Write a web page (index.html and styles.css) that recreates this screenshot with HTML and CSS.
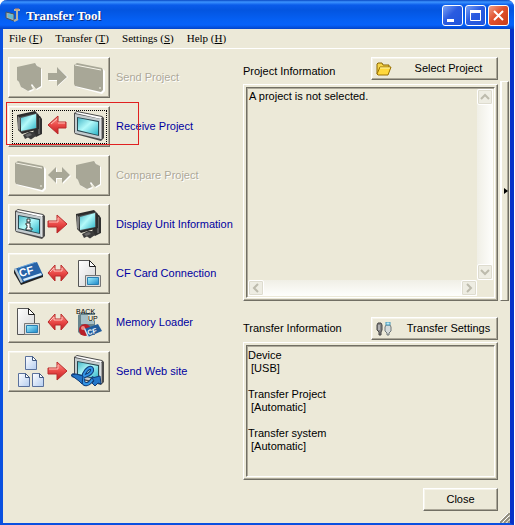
FILE: index.html
```html
<!DOCTYPE html>
<html lang="en">
<head>
<meta charset="utf-8">
<title>Transfer Tool</title>
<link rel="stylesheet" href="styles.css">
</head>
<body>
<svg class="defs" aria-hidden="true">
  <defs>
    <linearGradient id="screen" x1="0" y1="0" x2="1" y2="1">
      <stop offset="0" stop-color="#48b8c8"/><stop offset=".45" stop-color="#b4fafa"/><stop offset="1" stop-color="#2cb4c8"/>
    </linearGradient>
    <linearGradient id="lcd" x1="0" y1="0" x2="1" y2="1">
      <stop offset="0" stop-color="#a4f4ff"/><stop offset="1" stop-color="#1c86c8"/>
    </linearGradient>
    <linearGradient id="red" x1="0" y1="0" x2="0" y2="1">
      <stop offset="0" stop-color="#ff9a90"/><stop offset=".5" stop-color="#ea4a48"/><stop offset="1" stop-color="#c01c20"/>
    </linearGradient>
    <linearGradient id="page" x1="0" y1="0" x2="1" y2="1">
      <stop offset="0" stop-color="#ffffff"/><stop offset="1" stop-color="#d4d4d4"/>
    </linearGradient>
    <linearGradient id="bluepage" x1="0" y1="0" x2="1" y2="1">
      <stop offset="0" stop-color="#ffffff"/><stop offset="1" stop-color="#b4cdf0"/>
    </linearGradient>
    <symbol id="pc" viewBox="0 0 26 30">
      <path d="M19 5l4 1 2 3v15l-6 3-3-3z" fill="#303030"/>
      <path d="M22 8v16" stroke="#858585"/>
      <path d="M6 25l6-3h5l2 4-5 3.500-3-2-3 1.500z" fill="#3c3c3c"/>
      <path d="M8 25l5-2 2 2-5 2z" fill="#6a6a6a"/>
      <path d="M0 5L18 1l4 4v14L5 24l-4-4z" fill="#2c2c2c"/>
      <path d="M1 6l2 2v13l-2-2z" fill="#808080"/>
      <path d="M3 7l17-4v15L4 22z" fill="#525a5c"/>
      <path d="M4 8l15-4v14L4 21z" fill="url(#screen)"/>
    </symbol>
    <symbol id="panel" viewBox="0 0 30 30">
      <path d="M0 2l3-2 25 5 2 2v20l-3 3L1 23l-1-2z" fill="#4c4c4c"/>
      <path d="M1 2l2-1 25 5-1 2z" fill="#fff"/>
      <path d="M1 3l26 5v20L1 22z" fill="#c4cccf"/>
      <path d="M3 6l22 4v15L3 20z" fill="#284850"/>
      <path d="M4 7l20 4v13L4 19z" fill="url(#screen)"/>
      <path d="M27 8v20" stroke="#f5f5f5"/>
    </symbol>
    <symbol id="pc-off" viewBox="0 0 26 30">
      <path d="M1 6L19 2l2 3 4 2v18l-5 3-4-4-1 1 2 3-4 2-8-4-2-5-2-2z" fill="#fff"/>
      <path d="M0 5L18 1l2 3 4 2v18l-5 3-4-5-1 1 2 4-5 2-7-4-2-5-2-2z" fill="#a8a797"/>
    </symbol>
    <symbol id="panel-off" viewBox="0 0 31 31">
      <path d="M1 3l3-2 25 5 2 2v20l-3 3L2 24l-1-2z" fill="#fff"/>
      <path d="M0 2l3-2 25 5 1 2v20l-2 2L1 23l-1-2z" fill="#a8a797"/>
      <path d="M1 2l26 5" stroke="#f6f4e8" fill="none"/>
      <path d="M25 25h2" stroke="#f6f4e8"/>
    </symbol>
    <symbol id="right" viewBox="0 0 22 20">
      <path d="M1 7h9V1l10 9-10 9v-6H1z" fill="url(#red)" stroke="#b92c2c"/>
      <path d="M2 8h9V4" stroke="#ffc0b8" fill="none"/>
    </symbol>
    <symbol id="left" viewBox="0 0 22 20">
      <path d="M19 7h-8V1L1 10l10 9v-6h8z" fill="url(#red)" stroke="#b92c2c"/>
      <path d="M10 4L4 9M11 8h7" stroke="#ffc0b8" fill="none"/>
    </symbol>
    <symbol id="both" viewBox="0 0 22 20">
      <path d="M1 10l7-8v5h6V2l7 8-7 8v-5H8v5z" fill="url(#red)" stroke="#b92c2c"/>
      <path d="M3 9l4-4v3h8V5" stroke="#ffc0b8" fill="none"/>
    </symbol>
    <symbol id="doc" viewBox="0 0 25 29">
      <path d="M1.500 1.500h11l6 6v20h-17z" fill="url(#page)" stroke="#555"/>
      <path d="M12.500 1.500v6h6z" fill="#fff" stroke="#222"/>
      <path d="M8.500 16.500h15v11h-15z" fill="#dcdcdc" stroke="#777"/>
      <path d="M10.500 18.500h11v7h-11z" fill="url(#lcd)" stroke="#2a7fb0"/>
    </symbol>
    <symbol id="cf" viewBox="0 0 30 24">
      <path d="M0 8v3l7 12 22-8v-3z" fill="#222"/>
      <path d="M0 7L23 0l6 13L7 21z" fill="#2864a8"/>
      <path d="M0 7l2-1 7 14-2 1z" fill="#b4c4cc"/>
      <path d="M9 17l18-6 1 2-18 6z" fill="#d8eefc"/>
      <path d="M4 6l18-6" stroke="#6da5d8"/>
      <text class="cf-text" x="6" y="15" transform="rotate(-15 6 15)">CF</text>
    </symbol>
    <symbol id="sheet" viewBox="0 0 12 14">
      <path d="M.5.500h7l4 4v9H.5z" fill="url(#bluepage)" stroke="#5a719c"/>
      <path d="M7.500.500v4h4z" fill="#fff" stroke="#405880"/>
    </symbol>
  </defs>
</svg>

<div class="window">
  <header class="titlebar">
    <svg class="app-icon" viewBox="0 0 16 16" aria-hidden="true">
      <path d="M1 4l8 2v7l-8-3z" fill="#9eb1ba" stroke="#44545e"/>
      <path d="M3 6l5 1v4L3 9z" fill="#5fbcd4"/>
      <path d="M9 2h6M12 3v8M9 13l4-2" stroke="#b5b1a3" stroke-width="2" fill="none"/>
      <path d="M10 1h4" stroke="#d68b56"/>
    </svg>
    <h1>Transfer Tool</h1>
    <div class="caption">
      <button type="button" aria-label="Minimize"><svg viewBox="0 0 19 19"><path d="M4 13h7v3H4z" fill="#fff"/></svg></button>
      <button type="button" aria-label="Maximize"><svg viewBox="0 0 19 19"><path d="M4.500 4.500h10v10h-10z" fill="none" stroke="#fff"/><path d="M4 4h11v3H4z" fill="#fff"/></svg></button>
      <button type="button" class="close" aria-label="Close window"><svg viewBox="0 0 19 19"><path d="M5 5l9 9M14 5l-9 9" stroke="#fff" stroke-width="2"/></svg></button>
    </div>
  </header>

  <nav class="menu" aria-label="Main">
    <button type="button">File (<u>F</u>)</button>
    <button type="button">Transfer (<u>T</u>)</button>
    <button type="button">Settings (<u>S</u>)</button>
    <button type="button">Help (<u>H</u>)</button>
  </nav>

  <main class="body">
    <div class="actions">
      <div class="action off">
        <button type="button" class="raised" id="send" aria-labelledby="send-l" disabled>
          <svg viewBox="0 0 102 41"><use href="#pc-off" x="9" y="5" width="26" height="30"/>
          <path d="M41 17h9v-6l10 9-10 9v-5h-9z" fill="#fff"/><path d="M40 16h9v-6l10 10-10 9v-6h-9z" fill="#a8a797"/>
          <use href="#panel-off" x="66" y="6" width="31" height="31"/></svg>
        </button>
        <label id="send-l" for="send">Send Project</label>
      </div>
      <div class="action marked">
        <button type="button" class="raised focused" id="receive" aria-labelledby="receive-l">
          <svg viewBox="0 0 102 41"><use href="#pc" x="9" y="4" width="26" height="30"/><use href="#left" x="39" y="9" width="22" height="20"/><use href="#panel" x="66" y="5" width="30" height="30"/></svg>
        </button>
        <label id="receive-l" for="receive">Receive Project</label>
      </div>
      <div class="action off">
        <button type="button" class="raised" id="compare" aria-labelledby="compare-l" disabled>
          <svg viewBox="0 0 102 41"><use href="#panel-off" x="7" y="6" width="31" height="31"/>
          <path d="M41 21l8-8v5h6v-5l8 8-8 8v-5h-6v5z" fill="#fff"/><path d="M40 20l8-8v5h6v-5l8 8-8 8v-5h-6v5z" fill="#a8a797"/>
          <use href="#pc-off" x="68" y="5" width="26" height="30"/></svg>
        </button>
        <label id="compare-l" for="compare">Compare Project</label>
      </div>
      <div class="action">
        <button type="button" class="raised" id="unit" aria-labelledby="unit-l">
          <svg viewBox="0 0 102 41"><use href="#panel" x="7" y="5" width="30" height="30"/>
          <path d="M19 15h3v3h-3zM18 19h4v5h2v2h-6v-2h1v-3h-1z" fill="#fff" stroke="#111" stroke-width=".8"/>
          <use href="#right" x="39" y="10" width="22" height="20"/><use href="#pc" x="68" y="5" width="26" height="30"/></svg>
        </button>
        <label id="unit-l" for="unit">Display Unit Information</label>
      </div>
      <div class="action">
        <button type="button" class="raised" id="card" aria-labelledby="card-l">
          <svg viewBox="0 0 102 41"><use href="#cf" x="6" y="9" width="30" height="24"/><use href="#both" x="39" y="10" width="22" height="20"/><use href="#doc" x="69" y="6" width="25" height="29"/></svg>
        </button>
        <label id="card-l" for="card">CF Card Connection</label>
      </div>
      <div class="action">
        <button type="button" class="raised" id="memory" aria-labelledby="memory-l">
          <svg viewBox="0 0 102 41"><use href="#doc" x="8" y="5" width="25" height="29"/><use href="#both" x="39" y="10" width="22" height="20"/>
          <path d="M70 13l4-2h13v22H73l-3-3z" fill="#68858d"/><path d="M73 13h13v9H73z" fill="#a5c0c8"/>
          <circle cx="77" cy="28" r="6" fill="#b81f28"/><circle cx="75" cy="26" r="2" fill="#ee8b84"/>
          <path d="M76 27l14-5 4 7-14 6z" fill="#225d9c"/><path d="M76 27l1-1 4 9-1 1z" fill="#d8e8f0"/>
          <text class="cf-mini" x="80" y="33" transform="rotate(-14 80 33)">CF</text>
          <path d="M80 13h10v6H80z" fill="#ece9d8"/>
          <text class="backup" x="68" y="12">BACK</text><text class="backup" x="80" y="19">UP</text></svg>
        </button>
        <label id="memory-l" for="memory">Memory Loader</label>
      </div>
      <div class="action">
        <button type="button" class="raised" id="web" aria-labelledby="web-l">
          <svg viewBox="0 0 102 41"><use href="#sheet" x="17" y="5" width="12" height="14"/><use href="#sheet" x="10" y="22" width="12" height="14"/><use href="#sheet" x="24" y="22" width="12" height="14"/>
          <use href="#right" x="39" y="10" width="22" height="20"/><use href="#panel" x="66" y="4" width="30" height="30"/>
          <path d="M64 24l7 2c7 0 14-4 13-8-1-3-6 0-8 5-2 6-1 11 3 10 3 0 5-4 7-7" fill="none" stroke="#103c78" stroke-width="4"/>
          <path d="M64 24l7 2c7 0 14-4 13-8-1-3-6 0-8 5-2 6-1 11 3 10 3 0 5-4 7-7" fill="none" stroke="#3294e4" stroke-width="2"/>
          <path d="M63 24l5-1 7 2-1 8-3-3z" fill="#2376c8" stroke="#103c78"/>
          <path d="M84 27l8-2 1 8-3-1-3 3-3-3 2-2z" fill="#2376c8" stroke="#103c78"/></svg>
        </button>
        <label id="web-l" for="web">Send Web site</label>
      </div>
    </div>

    <div class="info">
      <div class="head">
        <label for="project">Project Information</label>
        <button type="button" class="raised tool">
          <svg viewBox="0 0 16 14"><path d="M1 12V2l1-1h4l1 2h6v3" fill="#f7d64a" stroke="#8a6500"/><path d="M1 12l3-7h11l-3 8H2z" fill="#ffd83c" stroke="#9a7000"/><path d="M4 6h10" stroke="#fff5a8"/></svg>
          <span>Select Project</span>
        </button>
      </div>
      <div class="frame project">
        <div class="well scroller">
          <textarea id="project" readonly>A project is not selected.</textarea>
          <div class="vbar">
            <button type="button" aria-label="Scroll up" disabled><svg viewBox="0 0 14 14"><path d="M3 9l4-4 4 4" /></svg></button>
            <button type="button" aria-label="Scroll down" disabled><svg viewBox="0 0 14 14"><path d="M3 5l4 4 4-4" /></svg></button>
          </div>
          <div class="hbar">
            <button type="button" aria-label="Scroll left" disabled><svg viewBox="0 0 14 14"><path d="M9 3L5 7l4 4" /></svg></button>
            <button type="button" aria-label="Scroll right" disabled><svg viewBox="0 0 14 14"><path d="M5 3l4 4-4 4" /></svg></button>
          </div>
        </div>
      </div>
      <div class="head second">
        <label for="transfer">Transfer Information</label>
        <button type="button" class="raised tool">
          <svg viewBox="0 0 16 14"><path d="M2 1h3l1 2v5l-1 2v3H3v-3L1 8V3z" fill="#858585" stroke="#444"/><path d="M3 3v5" stroke="#ddd"/><path d="M10 3h4l1 2v4l-2 2v2h-2v-2L9 9V5z" fill="#d5dada" stroke="#6f7678"/><path d="M10 0h4v3h-4z" fill="#bceaf8" stroke="#4698b8"/></svg>
          <span>Transfer Settings</span>
        </button>
      </div>
      <div class="frame">
        <div class="well">
          <textarea id="transfer" rows="9" readonly>Device
 [USB]

Transfer Project
 [Automatic]

Transfer system
 [Automatic]</textarea>
        </div>
      </div>
      <button type="button" class="raised done">Close</button>
    </div>

    <button type="button" class="expander" aria-label="Expand"><svg viewBox="0 0 4 6"><path d="M0 0l4 3-4 3z"/></svg></button>
  </main>
  <svg class="grip" viewBox="0 0 10 10" aria-hidden="true"><path d="M0 10L10 0M4 10l6-6M8 10l2-2" stroke="#8f8c7d" stroke-width="2"/><path d="M-1 9L9-1M3 9l6-6" stroke="#fff"/></svg>
</div>
</body>
</html>
```
FILE: styles.css
```css
* { box-sizing: border-box; }

body {
  margin: 0;
  background: #fff;
  color: #000;
  font: 11px/13px "Liberation Sans", Arial, sans-serif;
}

button, textarea { font: inherit; color: inherit; }
button { padding: 0; }
svg { display: block; }
.defs { position: absolute; width: 0; height: 0; }

.window {
  position: relative;
  display: flex;
  flex-direction: column;
  min-height: 100vh;
  margin-right: 1px;
  border: solid #0a50e0;
  border-width: 0 4px 2px 3px;
  border-right-color: #0831c8;
  border-radius: 7px 7px 0 0;
  background: #ece9d8;
}

.titlebar {
  display: flex;
  align-items: center;
  height: 29px;
  margin: 0 -4px 0 -3px;
  padding: 2px 5px 0 5px;
  border-radius: 7px 7px 0 0;
  background: linear-gradient(#0848c4 0, #3c94ff 2px, #0a5cea 5px, #0355e0 10px, #0560f4 20px, #0662fa 25px, #0344c8 29px);
}
.app-icon { width: 16px; height: 16px; margin-right: 5px; }
.titlebar h1 {
  flex: 1;
  margin: 0;
  color: #fff;
  font: bold 13px/16px "Liberation Serif", "Times New Roman", serif;
  text-shadow: 1px 1px #0a2a80;
}
.caption { display: flex; gap: 2px; }
.caption button {
  width: 21px;
  height: 21px;
  border: 1px solid #fff;
  border-radius: 3px;
  background: linear-gradient(135deg, #7ba2f4, #2a5be0 45%, #1f55dc);
}
.caption .close { background: linear-gradient(135deg, #f0a088, #e0502c 45%, #c83c18); }

.menu {
  display: flex;
  gap: 13px;
  height: 20px;
  padding: 0 6px;
  border-bottom: 1px solid #fff;
}
.menu button {
  border: 0;
  background: none;
  font: 11px/19px "Liberation Serif", "Times New Roman", serif;
}

.body { display: flex; flex: 1; padding: 8px 1px 12px 5px; }

.raised {
  border: 1px solid;
  border-color: #fff #716f64 #716f64 #fff;
  background: #ece9d8;
  box-shadow: inset -1px -1px #aca899, inset 1px 1px #f6f4ea;
}

.actions { display: flex; flex-direction: column; gap: 8px; width: 235px; }
.action { position: relative; display: flex; align-items: center; gap: 6px; color: #0000a0; }
.action .raised { position: relative; width: 102px; height: 41px; }
.action .raised svg { width: 102px; height: 41px; margin: -1px; }
.off { color: #aca899; text-shadow: 1px 1px #fff; }
.focused::after {
  content: "";
  position: absolute;
  inset: 3px 2px 2px 3px;
  border: 1px dotted #000;
}
.marked::after {
  content: "";
  position: absolute;
  top: -4px;
  left: -2px;
  width: 131px;
  height: 41px;
  border: 1px solid #e02020;
  pointer-events: none;
}
.cf-text { font: bold 11px "Liberation Sans", sans-serif; fill: #fff; }
.cf-mini { font: bold 7px "Liberation Sans", sans-serif; fill: #fff; }
.backup { font: 7px "Liberation Sans", sans-serif; fill: #000; }

.info { display: flex; flex: 1; flex-direction: column; }
.head { display: flex; align-items: center; justify-content: space-between; margin-bottom: 4px; }
.head label { padding-top: 6px; }
.second { margin: 16px 0 2px; }
.second label { padding: 0; }
.tool { display: flex; align-items: center; width: 127px; height: 23px; padding: 0 4px; }
.tool svg { width: 16px; height: 14px; }
.tool span { flex: 1; padding-left: 12px; text-align: center; }

.frame {
  padding: 1px;
  border: 1px solid;
  border-color: #fff #716f64 #716f64 #fff;
  box-shadow: inset -1px -1px #aca899;
}
.well {
  margin: 1px;
  border: 1px solid;
  border-color: #716f64 #fff #fff #716f64;
  box-shadow: inset 1px 1px #aca899;
}
.well textarea {
  display: block;
  width: 100%;
  padding: 3px 1px 10px;
  border: 0;
  outline: 0;
  background: none;
  resize: none;
  overflow: hidden;
}
.project { display: flex; flex: 1; }
.scroller { display: grid; flex: 1; grid-template: 1fr 16px / 1fr 16px; padding: 1px; }
.scroller textarea { height: 100%; padding-top: 1px; }
.vbar, .hbar { display: flex; justify-content: space-between; }
.vbar { flex-direction: column; background: linear-gradient(90deg, #f0efe6, #fefefc); }
.hbar { background: linear-gradient(#f0efe6, #fefefc); }
.vbar button, .hbar button {
  width: 16px;
  height: 16px;
  border: 1px solid #fff;
  border-radius: 2px;
  background: #eeede3;
  box-shadow: inset 0 0 0 1px #dedccf;
}
.vbar svg, .hbar svg { width: 14px; height: 14px; fill: none; stroke: #bdbbad; stroke-width: 2; }

.done { align-self: flex-end; width: 75px; height: 23px; margin-top: 8px; }

.expander {
  display: flex;
  align-items: center;
  justify-content: flex-end;
  width: 9px;
  height: 220px;
  margin: 24px 0 0 2px;
  border: 1px solid;
  border-color: #fff #716f64 #716f64 #fff;
  background: #ece9d8;
  box-shadow: inset 1px 0 #fff, inset -1px 0 #aca899;
}
.expander svg { width: 4px; height: 6px; }

.grip { position: absolute; right: 0; bottom: 0; width: 10px; height: 10px; }
```
